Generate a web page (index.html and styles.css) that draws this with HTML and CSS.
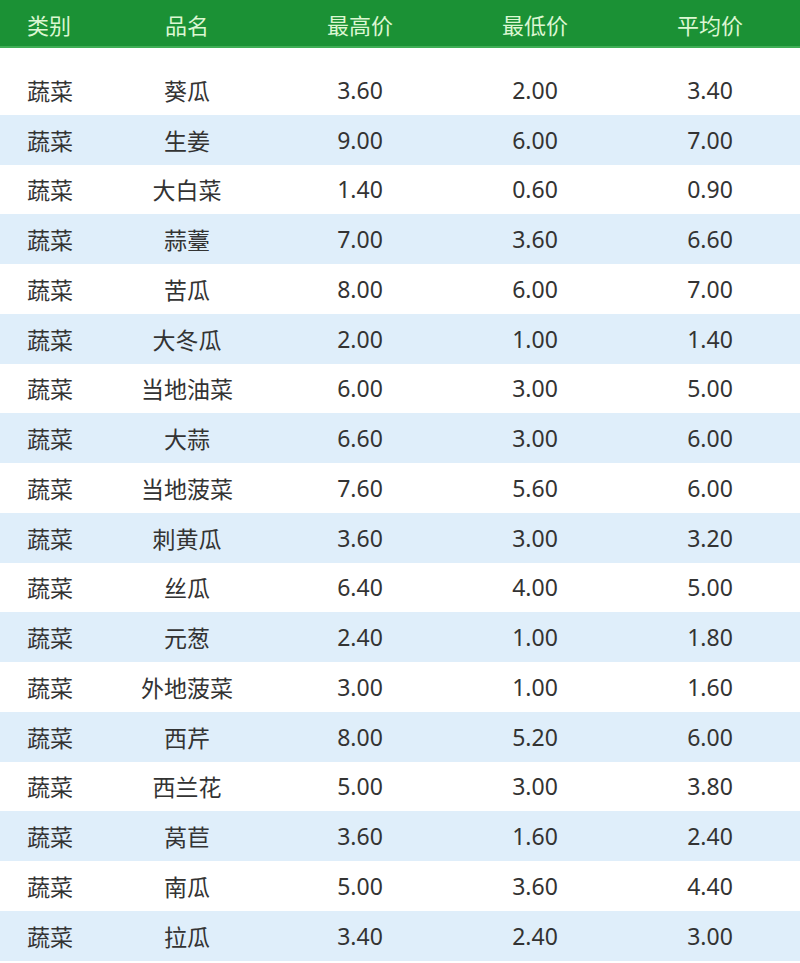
FILE: index.html
```html
<!DOCTYPE html>
<html lang="zh-CN">
<head>
<meta charset="utf-8">
<title>蔬菜价格</title>
<link rel="stylesheet" href="styles.css">
</head>
<body>
<div class="table">
  <div class="head">
    <div class="c1">类别</div><div class="c2">品名</div><div class="c3">最高价</div><div class="c4">最低价</div><div class="c5">平均价</div>
  </div>
  <div class="body">
    <div class="row"><div class="c1">蔬菜</div><div class="c2">葵瓜</div><div class="c3">3.60</div><div class="c4">2.00</div><div class="c5">3.40</div></div>
    <div class="row"><div class="c1">蔬菜</div><div class="c2">生姜</div><div class="c3">9.00</div><div class="c4">6.00</div><div class="c5">7.00</div></div>
    <div class="row"><div class="c1">蔬菜</div><div class="c2">大白菜</div><div class="c3">1.40</div><div class="c4">0.60</div><div class="c5">0.90</div></div>
    <div class="row"><div class="c1">蔬菜</div><div class="c2">蒜薹</div><div class="c3">7.00</div><div class="c4">3.60</div><div class="c5">6.60</div></div>
    <div class="row"><div class="c1">蔬菜</div><div class="c2">苦瓜</div><div class="c3">8.00</div><div class="c4">6.00</div><div class="c5">7.00</div></div>
    <div class="row"><div class="c1">蔬菜</div><div class="c2">大冬瓜</div><div class="c3">2.00</div><div class="c4">1.00</div><div class="c5">1.40</div></div>
    <div class="row"><div class="c1">蔬菜</div><div class="c2">当地油菜</div><div class="c3">6.00</div><div class="c4">3.00</div><div class="c5">5.00</div></div>
    <div class="row"><div class="c1">蔬菜</div><div class="c2">大蒜</div><div class="c3">6.60</div><div class="c4">3.00</div><div class="c5">6.00</div></div>
    <div class="row"><div class="c1">蔬菜</div><div class="c2">当地菠菜</div><div class="c3">7.60</div><div class="c4">5.60</div><div class="c5">6.00</div></div>
    <div class="row"><div class="c1">蔬菜</div><div class="c2">刺黄瓜</div><div class="c3">3.60</div><div class="c4">3.00</div><div class="c5">3.20</div></div>
    <div class="row"><div class="c1">蔬菜</div><div class="c2">丝瓜</div><div class="c3">6.40</div><div class="c4">4.00</div><div class="c5">5.00</div></div>
    <div class="row"><div class="c1">蔬菜</div><div class="c2">元葱</div><div class="c3">2.40</div><div class="c4">1.00</div><div class="c5">1.80</div></div>
    <div class="row"><div class="c1">蔬菜</div><div class="c2">外地菠菜</div><div class="c3">3.00</div><div class="c4">1.00</div><div class="c5">1.60</div></div>
    <div class="row"><div class="c1">蔬菜</div><div class="c2">西芹</div><div class="c3">8.00</div><div class="c4">5.20</div><div class="c5">6.00</div></div>
    <div class="row"><div class="c1">蔬菜</div><div class="c2">西兰花</div><div class="c3">5.00</div><div class="c4">3.00</div><div class="c5">3.80</div></div>
    <div class="row"><div class="c1">蔬菜</div><div class="c2">莴苣</div><div class="c3">3.60</div><div class="c4">1.60</div><div class="c5">2.40</div></div>
    <div class="row"><div class="c1">蔬菜</div><div class="c2">南瓜</div><div class="c3">5.00</div><div class="c4">3.60</div><div class="c5">4.40</div></div>
    <div class="row"><div class="c1">蔬菜</div><div class="c2">拉瓜</div><div class="c3">3.40</div><div class="c4">2.40</div><div class="c5">3.00</div></div>
  </div>
</div>
</body>
</html>
```
FILE: styles.css
```css
html, body {
  margin: 0;
  padding: 0;
  background: #ffffff;
}
body {
  width: 800px;
  height: 963px;
  overflow: hidden;
  font-family: "Noto Sans", "Noto Sans CJK SC", sans-serif;
  font-size: 23px;
  color: #333333;
}
.head, .row {
  display: grid;
  grid-template-columns: 112px 150px 196px 154px 188px;
  align-items: center;
}
.head {
  height: 48px;
  box-sizing: border-box;
  background: #1b9135;
  border-bottom: 2px solid #3fae55;
  color: #dcf7d2;
  font-size: 22px;
  padding-top: 1px;
}
.body {
  padding-top: 17px;
}
.row {
  height: 49.75px;
}
.row:nth-child(even) {
  background: #dfeefa;
}
.c1 {
  padding-left: 27px;
  text-align: left;
}
.c2, .c3, .c4 {
  text-align: center;
}
.c5 {
  text-align: center;
  padding-left: 8px;
}
```
